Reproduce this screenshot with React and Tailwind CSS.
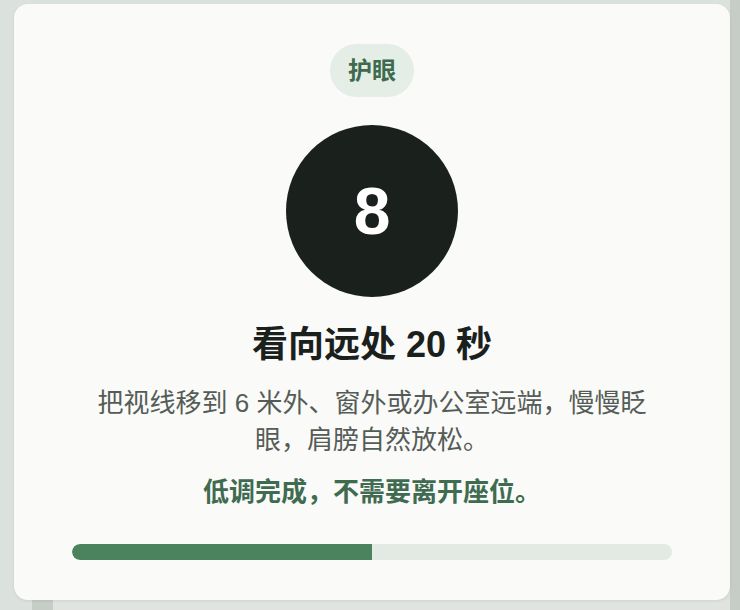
const FONT = { fontFamily: '"Liberation Sans", "Noto Sans CJK SC", sans-serif' };

export default function App() {
  const progress = 50;

  return (
    <div className="relative h-[610px] w-[740px] overflow-hidden bg-[#dbe1dc]" style={FONT}>
      {/* background strips behind the overlay */}
      <div className="absolute right-0 top-0 h-full w-[10px] bg-[#c6cdc6]" />
      <div className="absolute bottom-0 left-[53px] h-[10px] w-[677px] bg-[#e0e3df]" />
      <div className="absolute bottom-0 left-[32px] h-[10px] w-[21px] bg-[#c6ccc6]" />

      {/* Card */}
      <div className="relative ml-[14px] mt-[4px] flex h-[596px] w-[716px] flex-col items-center rounded-[14px] bg-[#fafaf8] px-[58px] pt-[40px] shadow-[0_1px_3px_rgba(0,0,0,0.08)]">
        <div className="flex h-[53px] w-[84px] items-center justify-center rounded-full bg-[#e5ede7] text-[24px] font-bold text-[#3e6a4e]">
          护眼
        </div>

        <div className="mt-[28px] flex h-[172px] w-[172px] items-center justify-center rounded-full bg-[#1a211d]">
          <span className="text-[66px] font-bold leading-none text-white">8</span>
        </div>

        <h1 className="mt-[28px] text-[36px] font-bold leading-[40px] text-[#1a211d]">
          看向远处 20 秒
        </h1>

        <p className="mt-[20px] max-w-[580px] text-center text-[26px] leading-[37px] text-[#555c57]">
          把视线移到 6 米外、窗外或办公室远端，慢慢眨眼，肩膀自然放松。
        </p>

        <p className="mt-[18px] text-[26px] font-bold leading-[30px] text-[#3f6b50]">
          低调完成，不需要离开座位。
        </p>

        <div className="mt-[37px] h-[16px] w-full overflow-hidden rounded-full bg-[#e3eae4]">
          <div className="h-full rounded-l-full bg-[#4a835e]" style={{ width: `${progress}%` }} />
        </div>
      </div>
    </div>
  );
}
